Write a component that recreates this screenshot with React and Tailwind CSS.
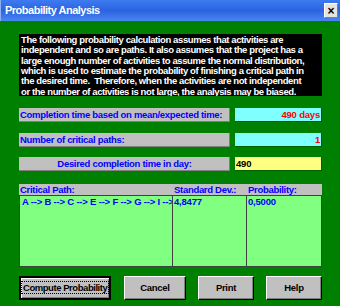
import React from 'react';

const font = { fontFamily: '"Liberation Sans", Arial, sans-serif' };

const noteLines = [
  'The following probability calculation assumes that activities are',
  'independent and so are paths. It also assumes that the project has a',
  'large enough number of activities to assume the normal distribution,',
  'which is used to estimate the probability of finishing a critical path in',
  'the desired time.\u00a0 Therefore, when the activities are not independent',
  'or the number of activities is not large, the analysis may be biased.',
];

function Field({ label, value, center, valueClass }) {
  return (
    <div className="flex h-[14px] gap-[5px]">
      <div
        className={
          "w-[211px] bg-[#c0c0c0] border-b border-r border-[#808080] text-[#0000ff] text-[9.5px] tracking-[-0.3px] font-bold leading-[13px] pl-[1px] whitespace-nowrap overflow-hidden " +
          (center ? "text-center" : "")
        }
      >
        {label}
      </div>
      <div className={"flex-1 border-b border-r border-[#006000] text-[9.5px] tracking-[-0.2px] font-bold leading-[13px] px-[1px] " + valueClass}>
        {value}
      </div>
    </div>
  );
}

function Btn({ children, w, isDefault }) {
  return (
    <button
      className={
        "h-[24px] bg-[#c0c0c0] text-black text-[9.5px] font-bold whitespace-nowrap " +
        w +
        (isDefault
          ? " tracking-[-0.45px] border-2 border-black shadow-[inset_1px_1px_0_#fff,inset_-1px_-1px_0_#808080]"
          : " tracking-[-0.3px] border border-t-white border-l-white border-r-black border-b-black shadow-[inset_-1px_-1px_0_#808080]")
      }
    >
      {isDefault ? (
        <span className="border border-dotted border-black px-[1px]">{children}</span>
      ) : (
        children
      )}
    </button>
  );
}

export default function App() {
  return (
    <div className="w-[340px] h-[306px] bg-[#008000] overflow-hidden" style={font}>
      <div className="h-[21px] flex items-center justify-between bg-gradient-to-b from-[#3d7bf0] via-[#2b63e0] to-[#4a86f2] border-l border-[#8fb0f0] pl-[4px] pr-[2px]">
        <span className="text-white font-bold text-[11px] tracking-[-0.5px]">Probability Analysis</span>
        <div className="w-[14px] h-[15px] bg-[#e8e4dc] border border-t-white border-l-white border-r-[#808080] border-b-[#808080] flex items-center justify-center text-black font-bold text-[12px] leading-none">
          ×
        </div>
      </div>
      <div className="pl-[19px] pr-[18px]">
        <div className="mt-[13px] h-[62px] bg-black text-white font-bold text-[9.5px] leading-[10.35px] pl-[2px] pr-[1px] pt-[1px] tracking-[-0.4px] whitespace-nowrap overflow-hidden">
          {noteLines.map((l, i) => (
            <div key={i}>{l}</div>
          ))}
        </div>
        <div className="mt-[12px]">
          <Field
            label="Completion time based on mean/expected time:"
            value="490 days"
            valueClass="bg-[#80ffff] text-[#ff0000] text-right"
          />
        </div>
        <div className="mt-[11px]">
          <Field label="Number of critical paths:" value="1" valueClass="bg-[#80ffff] text-[#ff0000] text-right" />
        </div>
        <div className="mt-[10px]">
          <Field
            label="Desired completion time in day:"
            value="490"
            center
            valueClass="bg-[#ffff80] text-black text-left"
          />
        </div>
        <div className="mt-[13px]">
          <div className="h-[11px] bg-[#c0c0c0] flex text-[#0000ff] text-[9.5px] tracking-[-0.3px] font-bold leading-[11px]">
            <div className="w-[154px] pl-[1px]">Critical Path:</div>
            <div className="w-[74px] pl-[1px]">Standard Dev.:</div>
            <div className="flex-1 pl-[1px]">Probability:</div>
          </div>
          <div className="h-[72px] bg-[#80ff80] flex border border-[#404040] text-[#0000ff] text-[9.5px] tracking-[-0.2px] font-bold leading-[12px]">
            <div className="w-[153px] border-r border-[#404040] pl-[2px] overflow-hidden whitespace-nowrap">
              A --&gt; B --&gt; C --&gt; E --&gt; F --&gt; G --&gt; I --&gt; J
            </div>
            <div className="w-[74px] border-r border-[#404040] pl-[1px]">4,8477</div>
            <div className="flex-1 pl-[1px]">0,5000</div>
          </div>
        </div>
        <div className="mt-[9px] flex justify-between">
          <Btn w="w-[92px]" isDefault>Compute Probability</Btn>
          <div className="flex gap-[12px]">
            <Btn w="w-[62px]">Cancel</Btn>
            <Btn w="w-[56px]">Print</Btn>
            <Btn w="w-[56px]">Help</Btn>
          </div>
        </div>
      </div>
    </div>
  );
}
